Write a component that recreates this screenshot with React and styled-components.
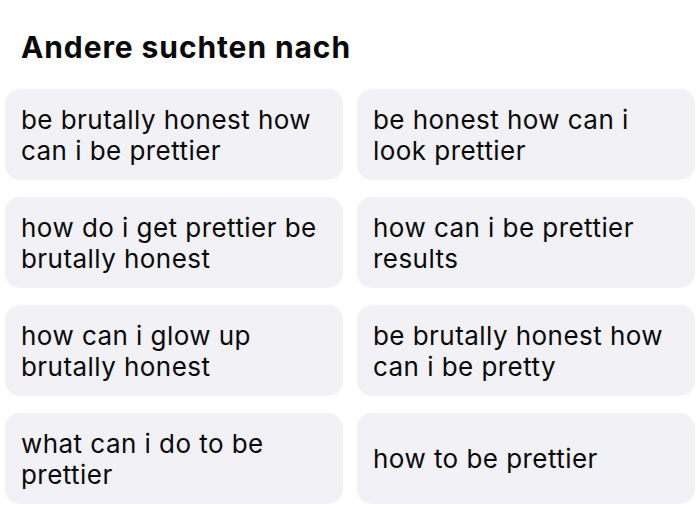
import styled, { createGlobalStyle } from 'styled-components';

const GlobalStyle = createGlobalStyle`
  html, body {
    margin: 0;
    padding: 0;
    background: #ffffff;
  }
  body {
    font-family: Inter, "Liberation Sans", sans-serif;
    font-variant-ligatures: none;
    color: #0a0a0a;
  }
`;

const Section = styled.section`
  width: 700px;
  height: 525px;
  padding: 28px 5px 0;
  box-sizing: border-box;
`;

const Title = styled.h2`
  margin: 0 0 23px 16px;
  font-size: 30px;
  line-height: 38px;
  font-weight: 700;
  letter-spacing: 0.9px;
  color: #0a0a0a;
`;

const Grid = styled.div`
  display: grid;
  grid-template-columns: 1fr 1fr;
  column-gap: 14px;
  row-gap: 17px;
`;

const Card = styled.div`
  height: 91px;
  box-sizing: border-box;
  background: #f2f1f6;
  border-radius: 15px;
  padding: 0 16px;
  display: flex;
  align-items: center;
  font-size: 26px;
  line-height: 31px;
  letter-spacing: 0.45px;
  color: #0a0a0a;
`;

const items = [
  'be brutally honest how can i be prettier',
  'be honest how can i look prettier',
  'how do i get prettier be brutally honest',
  'how can i be prettier results',
  'how can i glow up brutally honest',
  'be brutally honest how can i be pretty',
  'what can i do to be prettier',
  'how to be prettier',
];

export default function App() {
  return (
    <>
      <GlobalStyle />
      <Section>
        <Title>Andere suchten nach</Title>
        <Grid>
          {items.map(text => (
            <Card key={text}>{text}</Card>
          ))}
        </Grid>
      </Section>
    </>
  );
}
